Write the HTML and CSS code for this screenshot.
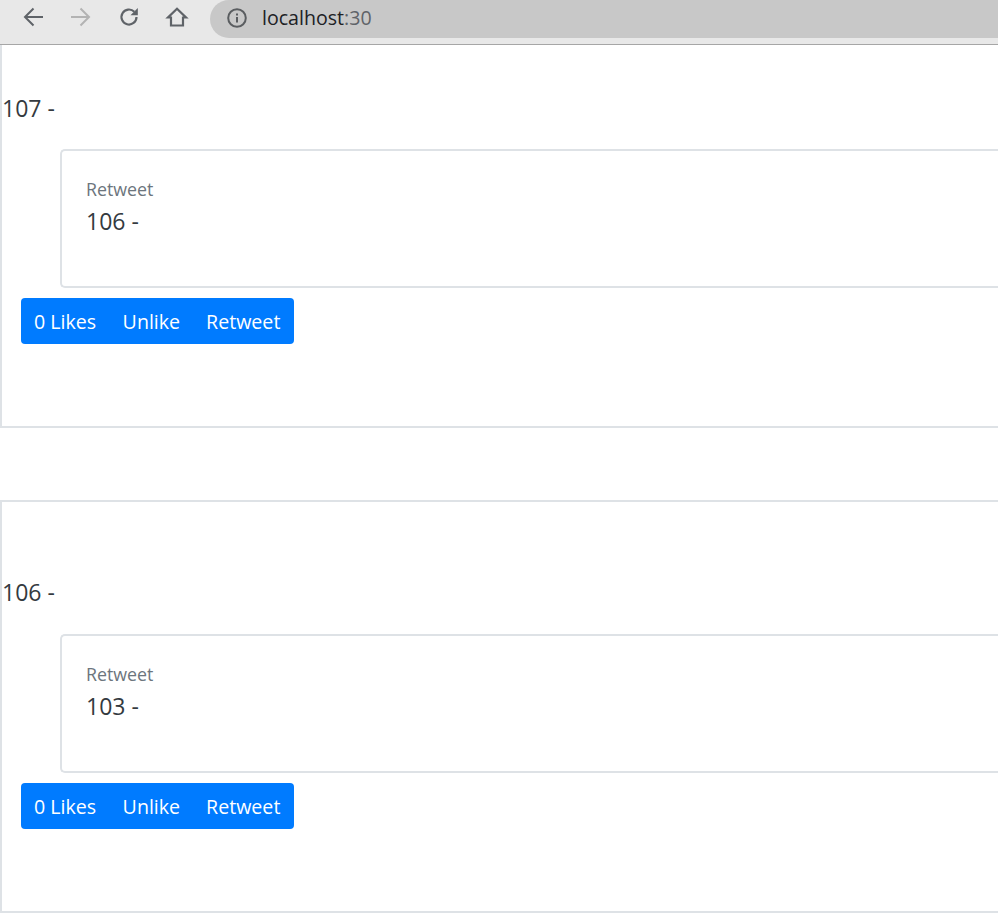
FILE: index.html
```html
<!DOCTYPE html>
<html lang="en">
<head>
<meta charset="utf-8">
<title>localhost:30</title>
<link rel="stylesheet" href="styles.css">
</head>
<body>
<header class="chrome">
  <svg class="nav" viewBox="0 0 24 24"><path d="M22 12H4M12.5 3.5L4 12l8.5 8.5" fill="none" stroke="#5f6368" stroke-width="2"/></svg>
  <svg class="nav" viewBox="0 0 24 24"><path d="M2 12h18M11.5 3.5L20 12l-8.5 8.5" fill="none" stroke="#b3b3b3" stroke-width="2"/></svg>
  <svg class="nav" viewBox="0 0 24 24"><path d="M19.5 12a7.5 7.5 0 1 1-2.2-5.3" fill="none" stroke="#5f6368" stroke-width="2.2"/><path d="M20.8 3v7.3h-7.3z" fill="#5f6368"/></svg>
  <svg class="nav" viewBox="0 0 24 24"><path d="M12 3.8L3 12.5H6V20.5H18V12.5H21Z" fill="none" stroke="#5f6368" stroke-width="2.2"/></svg>
  <div class="omnibox">
    <svg class="info" viewBox="0 0 20 20"><circle cx="10" cy="10" r="8.8" fill="none" stroke="#5a5d60" stroke-width="2"/><path d="M9 9h2v5.5H9zM9 5.5h2v2H9z" fill="#5a5d60"/></svg>
    <span class="url">localhost<span class="port">:30</span></span>
  </div>
</header>
<main class="feed">
  <article class="post post-first">
    <p class="body">107 -</p>
    <section class="quote">
      <div class="quote-label">Retweet</div>
      <p class="quote-body">106 -</p>
    </section>
    <div class="actions"><button>0 Likes</button><button>Unlike</button><button>Retweet</button></div>
  </article>
  <article class="post post-second">
    <p class="body">106 -</p>
    <section class="quote">
      <div class="quote-label">Retweet</div>
      <p class="quote-body">103 -</p>
    </section>
    <div class="actions"><button>0 Likes</button><button>Unlike</button><button>Retweet</button></div>
  </article>
</main>
</body>
</html>
```
FILE: styles.css
```css
* { box-sizing: border-box; }
html, body { margin: 0; padding: 0; overflow: hidden; background: #fff; }
body { height: 918px; font-family: "Open Sans", "Noto Sans", sans-serif; color: #343a40; }
.chrome { display: flex; align-items: center; height: 45px; padding: 0 0 11px 21px; gap: 24px; background: #e8e8e8; border-bottom: 1px solid #a6a6a6; }
.nav { width: 24px; height: 24px; flex: none; }
.omnibox { display: flex; align-items: center; align-self: flex-start; flex: 1; height: 38px; margin-left: -3px; padding: 0 0 3px 17px; background: #c8c8c8; border-radius: 19px 0 0 19px; }
.info { width: 20px; height: 20px; margin-right: 15px; }
.url { font-size: 19.6px; color: #202124; }
.port { color: #5f6368; }
.feed { display: flex; flex-direction: column; gap: 72px; }
.post { border: 2px solid #dee2e6; border-right: 0; }
.post-first { height: 383px; padding-top: 48px; border-top: 0; }
.post-second { height: 413px; padding-top: 75px; }
.body { margin: 0; font-size: 23px; line-height: 30px; }
.quote { height: 139px; padding: 26px 24px; border: 2px solid #dee2e6; border-right: 0; border-radius: 5px 0 0 5px; margin-left: 58px; }
.post-first .quote { margin-top: 26px; }
.post-second .quote { margin-top: 27px; }
.quote-label { font-size: 17.8px; line-height: 24px; color: #6c757d; }
.quote-body { margin: 5px 0 0; font-size: 23px; line-height: 30px; }
.actions { display: inline-flex; margin: 10px 0 0 19px; height: 46px; background: #007bff; border-radius: 4px; }
.actions button { padding: 0 13px; border: 0; background: none; color: #fff; font: inherit; font-size: 19.6px; }
.actions button:first-child { padding-right: 13.5px; }
.actions button:last-child { padding-right: 13.5px; }
```
